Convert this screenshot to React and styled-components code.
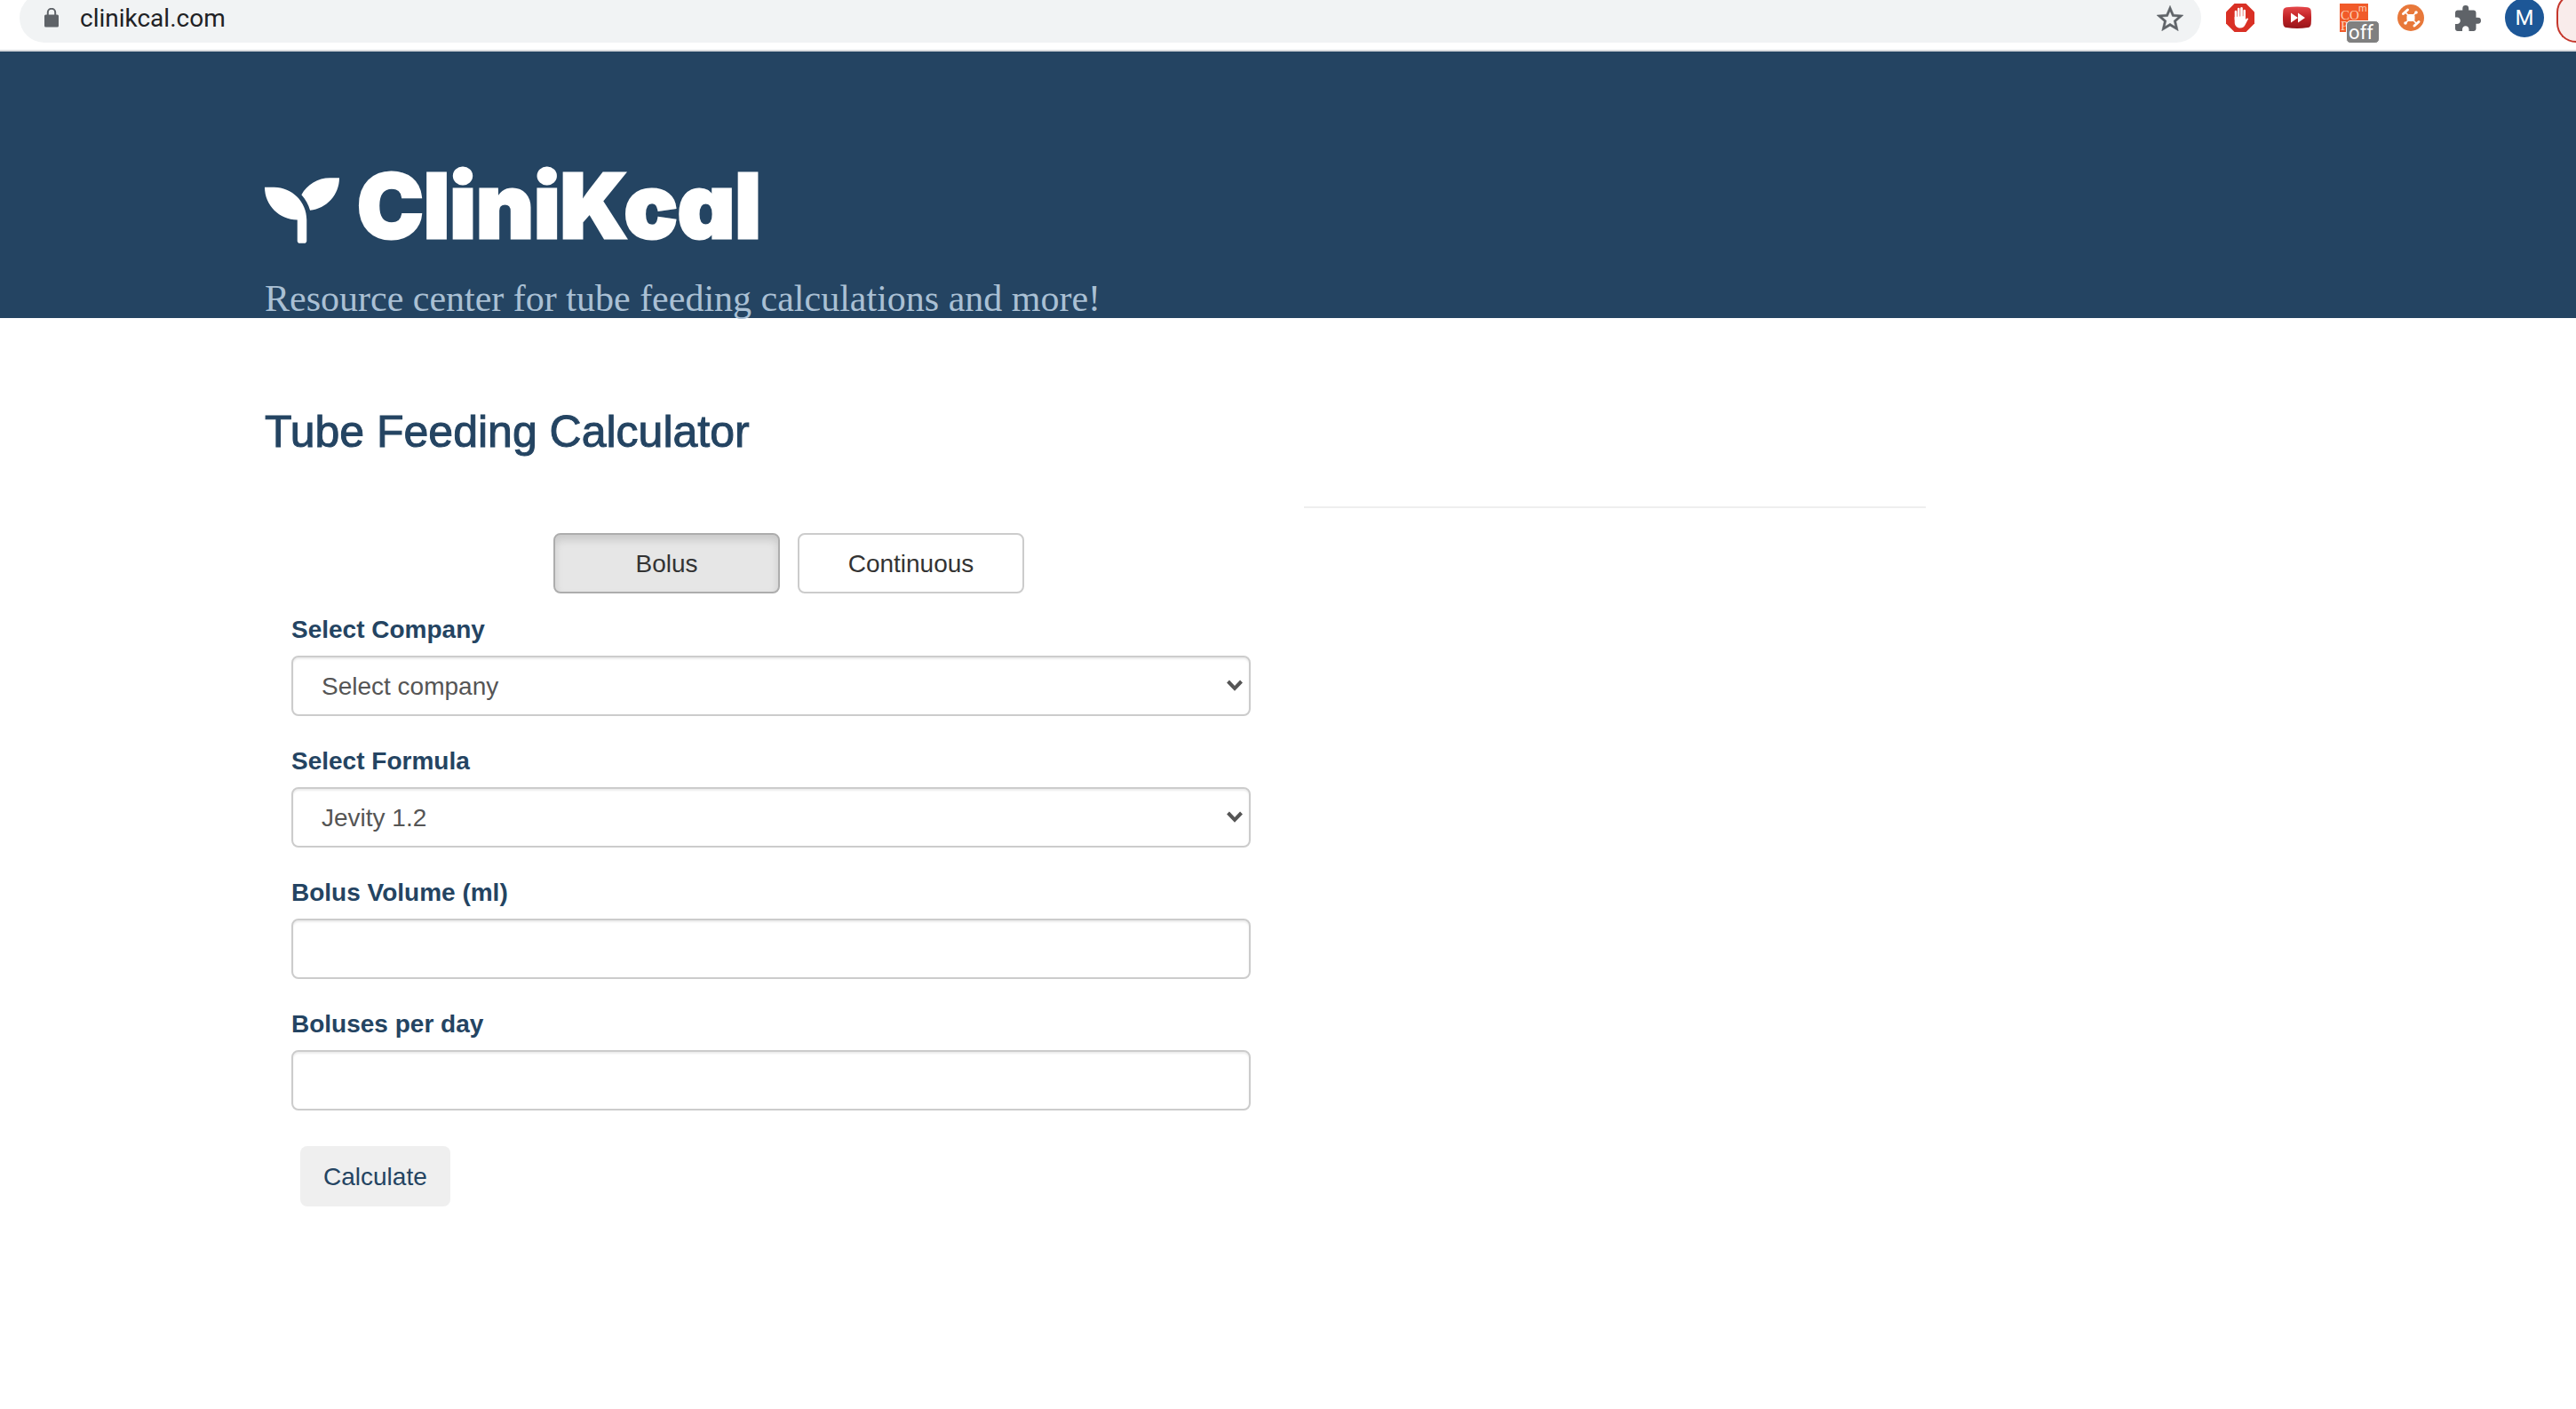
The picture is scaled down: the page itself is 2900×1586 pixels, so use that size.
import React, { useState } from "react";
import styled, { createGlobalStyle } from "styled-components";

const navy = "#244462";
const sans = '"Liberation Sans", Arial, Helvetica, sans-serif';
const serif = '"Liberation Serif", "Times New Roman", serif';
const ui = 'Roboto, "Liberation Sans", sans-serif';

const GlobalStyle = createGlobalStyle`
  *, *::before, *::after { box-sizing: border-box; }
  body { margin: 0; background: #fff; color: ${navy}; font: 28px/42px ${sans}; }
  h1, h2, p { margin: 0; }
  button, input, select { font: inherit; margin: 0; }
  svg { display: block; }
`;

/* ---------- browser bar ---------- */

const Toolbar = styled.div`
  display: flex;
  height: 58px;
  padding-left: 22px;
  border-bottom: 2px solid #d8dade;
  overflow: hidden;
`;

const AddressBar = styled.div`
  display: flex;
  flex: 1;
  align-items: center;
  gap: 24px;
  height: 56px;
  margin: -8px 12px 0 0;
  padding: 0 20px 0 28px;
  border-radius: 28px;
  background: #f1f3f4;
`;

const Address = styled.input`
  flex: 1;
  padding: 2px 0 0;
  border: 0;
  outline: 0;
  background: none;
  color: #202124;
  font: 28px/36px ${ui};
`;

const IconButton = styled.button`
  display: flex;
  align-items: center;
  justify-content: center;
  flex: none;
  width: ${(p) => p.$width || 64}px;
  height: 40px;
  padding: 0;
  border: 0;
  background: none;
`;

const BadgeHost = styled.span`
  position: relative;
  display: block;
`;

const Badge = styled.span`
  position: absolute;
  left: 7px;
  top: 19px;
  width: 38px;
  height: 26px;
  padding-right: 4px;
  border: 1px solid #fff;
  border-radius: 5px;
  background: #808080;
  color: #fff;
  font: 22px/26px ${ui};
`;

const Avatar = styled.span`
  flex: none;
  width: 44px;
  height: 44px;
  border-radius: 50%;
  background: #1d5797;
  color: #fff;
  font: 24px/44px ${ui};
`;

const UpdatePill = styled.button`
  flex: none;
  width: 22px;
  height: 56px;
  margin: -8px 0 0 4px;
  padding: 0;
  border: 2px solid #c5372c;
  border-right: 0;
  border-radius: 28px 0 0 28px;
  background: #f9eceb;
`;

/* ---------- page ---------- */

const Container = styled.div`
  max-width: 2340px;
  margin: 0 auto;
  padding: 0 30px;
`;

const Header = styled.header`
  padding: 122px 24px 0 0;
  background: ${navy};
`;

const Brand = styled.a`
  display: flex;
  align-items: center;
  gap: 20px;
  height: 114px;
  color: #fff;
  text-decoration: none;
`;

const Wordmark = styled.h1`
  padding-bottom: 10px;
  font: 900 100px/104px Inter, Lato, sans-serif;
  font-feature-settings: "cv11";
  -webkit-text-stroke: 3px #fff;
`;

const Tagline = styled.p`
  padding-top: 20px;
  color: #aac0d4;
  font: 42px/44px ${serif};
`;

const Main = styled.main`
  padding: 100px 24px 0 0;
`;

const Title = styled.h2`
  font: 400 50px/56px ${sans};
  -webkit-text-stroke: 1px ${navy};
`;

const Columns = styled.div`
  display: grid;
  grid-template-columns: 6fr 4fr 2fr;
  padding-top: 56px;
`;

const Form = styled.form`
  display: flex;
  flex-direction: column;
  gap: 30px;
  padding: 30px 30px 0;
`;

const ModeSwitch = styled.div`
  display: grid;
  grid-template-columns: 255px 255px;
  gap: 20px;
  margin-bottom: -10px;
  padding-left: 295px;
`;

const ModeButton = styled.button`
  height: 68px;
  padding: 2px 0 0;
  border: 2px solid ${(p) => (p.$active ? "#adadad" : "#ccc")};
  border-radius: 8px;
  background: ${(p) => (p.$active ? "#e6e6e6" : "#fff")};
  box-shadow: ${(p) => (p.$active ? "inset 0 6px 10px rgba(0, 0, 0, 0.125)" : "none")};
  color: #333;
`;

const Field = styled.div`
  display: flex;
  flex-direction: column;
  gap: 8px;
`;

const Label = styled.label`
  font-weight: 700;
`;

const Control = styled.input`
  appearance: none;
  width: 100%;
  height: 68px;
  padding: 2px 32px 0;
  border: 2px solid #ccc;
  border-radius: 8px;
  outline: 0;
  background: #fff;
  box-shadow: inset 0 2px 2px rgba(0, 0, 0, 0.075);
  color: #555;
`;

const SelectBox = styled.div`
  display: grid;
  align-items: center;

  > * { grid-area: 1 / 1; }
  > svg { justify-self: end; margin-right: 9px; pointer-events: none; }
`;

const Submit = styled.button`
  align-self: flex-start;
  height: 68px;
  margin: 10px;
  padding: 2px 26px 0;
  border: 0;
  border-radius: 8px;
  background: #efefef;
  color: ${navy};
`;

const Results = styled.section`
  padding: 0 30px;
`;

const Rule = styled.hr`
  margin: 0;
  border: 0;
  border-top: 2px solid #eee;
`;

/* ---------- icons ---------- */

const LockIcon = () => (
  <svg width="16" height="22" viewBox="0 0 16 22">
    <rect x="0" y="7.500" width="16" height="14" rx="1.500" fill="#5f6368" />
    <path d="M3.800 8V5a4.200 4.200 0 0 1 8.400 0v3" fill="none" stroke="#5f6368" strokeWidth="2" />
  </svg>
);

const StarIcon = () => (
  <svg width="30" height="29" viewBox="2 2 20 19" fill="#5f6368" stroke="#5f6368" strokeWidth="0.300">
    <path d="M22 9.240l-7.190-.620L12 2 9.190 8.630 2 9.240l5.460 4.730L5.820 21 12 17.270 18.180 21l-1.630-7.030L22 9.240zM12 15.400l-3.760 2.270 1-4.280-3.320-2.880 4.380-.380L12 6.100l1.710 4.040 4.380.380-3.320 2.880 1 4.280L12 15.400z" />
  </svg>
);

const BlockIcon = () => (
  <svg width="32" height="32" viewBox="0 0 32 32">
    <path d="M9.500 0h13L32 9.500v13L22.500 32h-13L0 22.500v-13z" fill="#d93025" />
    <g stroke="#fff" strokeWidth="2.600" strokeLinecap="round" fill="none">
      <path d="M11 9V18M14.200 6V17M17.500 5.200V17M20.700 8V18" />
    </g>
    <path d="M9.700 15v6c0 4 2.500 6.500 6.300 6.500 3 0 4.600-1.600 5.800-4l3.400-6.500c-1-1-2.200-.500-3.200 1V14z" fill="#fff" />
  </svg>
);

const ForwardIcon = () => (
  <svg width="32" height="26" viewBox="0 0 32 26">
    <defs>
      <linearGradient id="forward-red" x1="0" y1="0" x2="0" y2="1">
        <stop offset="0" stopColor="#e5484a" />
        <stop offset="0.500" stopColor="#c12226" />
        <stop offset="1" stopColor="#96151a" />
      </linearGradient>
    </defs>
    <path d="M4 1.200Q16-.400 28 1.200 31.300 1.600 31.700 5q.600 8 0 15-.400 3.600-3.700 4.100-12 1.900-24 0Q.700 23.600.300 20q-.600-7 0-15Q.700 1.600 4 1.200z" fill="url(#forward-red)" />
    <path d="M9 7.500l8 5.500-8 5.500zM17 7.500l8 5.500-8 5.500z" fill="#fff" />
  </svg>
);

const ComicIcon = () => (
  <svg width="32" height="32" viewBox="0 0 32 32" overflow="visible" fill="#fcd0b5">
    <rect width="32" height="32" fill="#f15a29" />
    <text x="1" y="18" fontSize="15" fontFamily="Liberation Serif, serif">CO</text>
    <text x="21" y="9" fontSize="11" fontFamily="Roboto, sans-serif">m</text>
    <text x="1" y="30" fontSize="15" fontFamily="Liberation Serif, serif">P</text>
  </svg>
);

const HubIcon = () => (
  <svg width="30" height="30" viewBox="0 0 30 30">
    <circle cx="15" cy="15" r="15" fill="#e8783a" />
    <g stroke="#fff" fill="none" strokeLinecap="round">
      <path d="M9 9l12 12M21 9L9 21" strokeWidth="1.600" />
      <path d="M6.500 10.500l5-4.500M19 24l5-4.500" strokeWidth="3" />
    </g>
    <g fill="#fff">
      <rect x="10.500" y="11" width="9" height="8" rx="2.500" />
      <circle cx="21" cy="9" r="1.800" />
      <circle cx="9" cy="21" r="1.800" />
    </g>
  </svg>
);

const PuzzleIcon = () => (
  <svg width="29" height="29" viewBox="2 1 21 21" fill="#5f6368">
    <path d="M20.500 11H19V7c0-1.100-.900-2-2-2h-4V3.500a2.500 2.500 0 0 0-5 0V5H4c-1.100 0-1.990.900-1.990 2v3.800H3.500c1.490 0 2.700 1.210 2.700 2.700s-1.210 2.700-2.700 2.700H2V20c0 1.100.900 2 2 2h3.800v-1.500c0-1.490 1.210-2.700 2.700-2.700s2.700 1.210 2.700 2.700V22H17c1.100 0 2-.900 2-2v-4h1.500a2.500 2.500 0 0 0 0-5z" />
  </svg>
);

const SeedlingIcon = () => (
  <svg width="84" height="74" viewBox="0 32 512 448" fill="#fff">
    <path d="M64 96H0c0 123.700 100.300 224 224 224v144c0 8.800 7.200 16 16 16h32c8.800 0 16-7.200 16-16V320C288 196.300 187.700 96 64 96zm384-64c-84.200 0-157.400 46.500-195.700 115.200 27.700 30.200 48.200 66.900 59 107.600C424 243.100 512 147.900 512 32h-64z" />
  </svg>
);

const ChevronIcon = () => (
  <svg width="18" height="14" viewBox="0 0 18 14">
    <path d="M1.500 2L9 9.800 16.500 2" fill="none" stroke="#555" strokeWidth="4" />
  </svg>
);

/* ---------- app ---------- */

const SelectField = ({ id, label, options }) => (
  <Field>
    <Label htmlFor={id}>{label}</Label>
    <SelectBox>
      <Control as="select" id={id}>
        {options.map((name) => (
          <option key={name}>{name}</option>
        ))}
      </Control>
      <ChevronIcon />
    </SelectBox>
  </Field>
);

const NumberField = ({ id, label }) => (
  <Field>
    <Label htmlFor={id}>{label}</Label>
    <Control id={id} type="text" inputMode="numeric" />
  </Field>
);

export default function App() {
  const [mode, setMode] = useState("Bolus");

  return (
    <>
      <GlobalStyle />
      <Toolbar>
        <AddressBar>
          <LockIcon />
          <Address aria-label="Address" defaultValue="clinikcal.com" />
          <IconButton $width={30} aria-label="Bookmark">
            <StarIcon />
          </IconButton>
        </AddressBar>
        <IconButton aria-label="Ad blocker"><BlockIcon /></IconButton>
        <IconButton aria-label="Fast forward"><ForwardIcon /></IconButton>
        <IconButton aria-label="Comp">
          <BadgeHost>
            <ComicIcon />
            <Badge>off</Badge>
          </BadgeHost>
        </IconButton>
        <IconButton aria-label="Hub"><HubIcon /></IconButton>
        <IconButton aria-label="Extensions"><PuzzleIcon /></IconButton>
        <IconButton aria-label="Profile"><Avatar>M</Avatar></IconButton>
        <UpdatePill aria-label="Update" />
      </Toolbar>

      <Header>
        <Container>
          <Brand href="#">
            <SeedlingIcon />
            <Wordmark>CliniKcal</Wordmark>
          </Brand>
          <Tagline>Resource center for tube feeding calculations and more!</Tagline>
        </Container>
      </Header>

      <Main>
        <Container>
          <Title>Tube Feeding Calculator</Title>
          <Columns>
            <Form onSubmit={(e) => e.preventDefault()}>
              <ModeSwitch>
                {["Bolus", "Continuous"].map((name) => (
                  <ModeButton
                    key={name}
                    type="button"
                    $active={mode === name}
                    aria-pressed={mode === name}
                    onClick={() => setMode(name)}
                  >
                    {name}
                  </ModeButton>
                ))}
              </ModeSwitch>
              <SelectField id="company" label="Select Company" options={["Select company"]} />
              <SelectField id="formula" label="Select Formula" options={["Jevity 1.2"]} />
              <NumberField id="volume" label="Bolus Volume (ml)" />
              <NumberField id="count" label="Boluses per day" />
              <Submit type="submit">Calculate</Submit>
            </Form>
            <Results aria-label="Results">
              <Rule />
            </Results>
          </Columns>
        </Container>
      </Main>
    </>
  );
}
